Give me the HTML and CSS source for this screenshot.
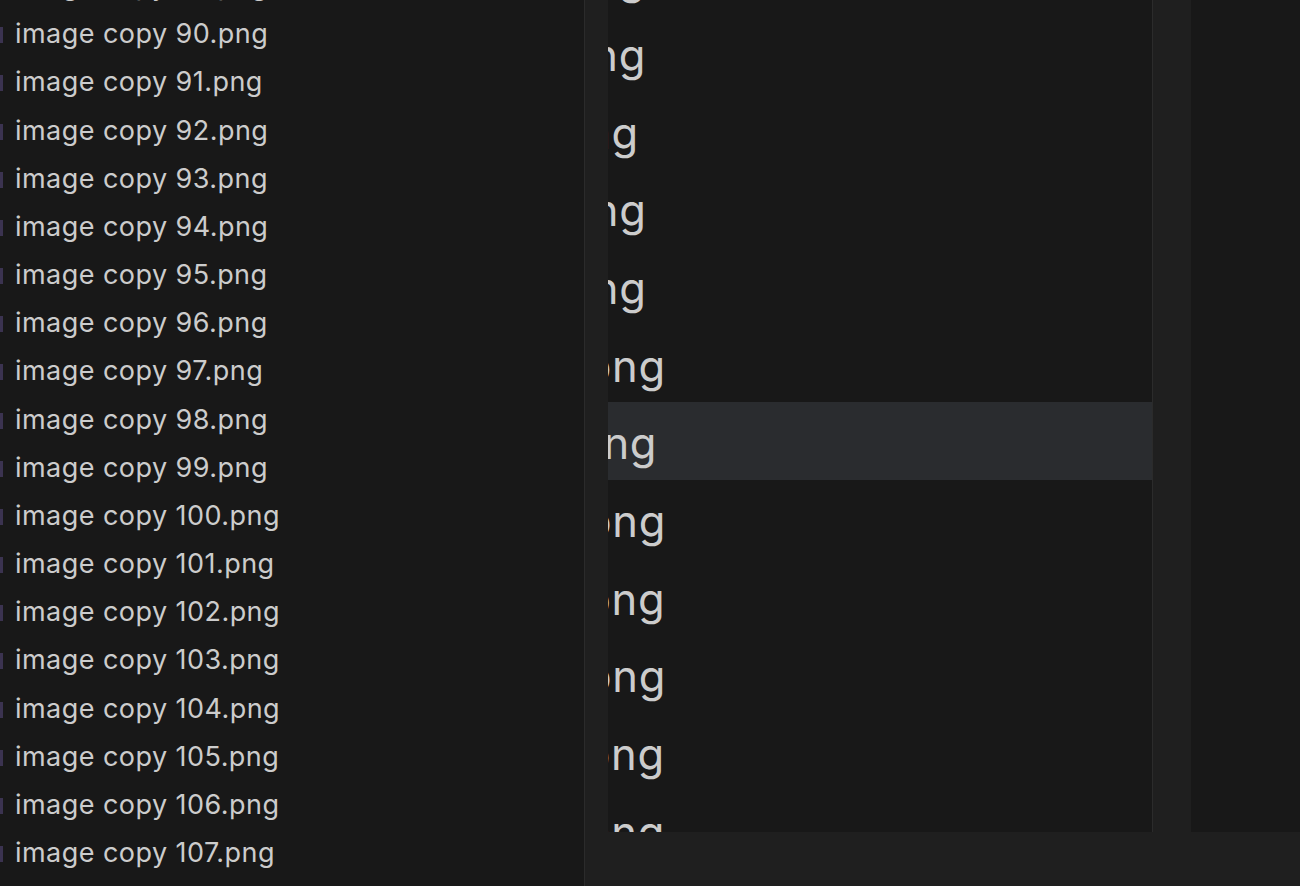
FILE: index.html
```html
<!DOCTYPE html>
<html>
<head>
<meta charset="utf-8">
<link rel="stylesheet" href="styles.css">
</head>
<body>
<div class="app">
  <aside class="sidebar">
    <div class="list">
      <div class="row"><span class="mark"></span><span class="name">image copy 89.png</span></div>
      <div class="row"><span class="mark"></span><span class="name">image copy 90.png</span></div>
      <div class="row"><span class="mark"></span><span class="name">image copy 91.png</span></div>
      <div class="row"><span class="mark"></span><span class="name">image copy 92.png</span></div>
      <div class="row"><span class="mark"></span><span class="name">image copy 93.png</span></div>
      <div class="row"><span class="mark"></span><span class="name">image copy 94.png</span></div>
      <div class="row"><span class="mark"></span><span class="name">image copy 95.png</span></div>
      <div class="row"><span class="mark"></span><span class="name">image copy 96.png</span></div>
      <div class="row"><span class="mark"></span><span class="name">image copy 97.png</span></div>
      <div class="row"><span class="mark"></span><span class="name">image copy 98.png</span></div>
      <div class="row"><span class="mark"></span><span class="name">image copy 99.png</span></div>
      <div class="row"><span class="mark"></span><span class="name">image copy 100.png</span></div>
      <div class="row"><span class="mark"></span><span class="name">image copy 101.png</span></div>
      <div class="row"><span class="mark"></span><span class="name">image copy 102.png</span></div>
      <div class="row"><span class="mark"></span><span class="name">image copy 103.png</span></div>
      <div class="row"><span class="mark"></span><span class="name">image copy 104.png</span></div>
      <div class="row"><span class="mark"></span><span class="name">image copy 105.png</span></div>
      <div class="row"><span class="mark"></span><span class="name">image copy 106.png</span></div>
      <div class="row"><span class="mark"></span><span class="name">image copy 107.png</span></div>
      <div class="row"><span class="mark"></span><span class="name">image copy 108.png</span></div>
    </div>
  </aside>
  <main class="workbench">
    <div class="top">
      <div class="gutter"></div>
      <section class="zoomed">
        <div class="zlist">
          <div class="zrow"><span class="zname">image copy 95.png</span></div>
          <div class="zrow"><span class="zname">image copy 96.png</span></div>
          <div class="zrow"><span class="zname">image copy 97.png</span></div>
          <div class="zrow"><span class="zname">image copy 98.png</span></div>
          <div class="zrow"><span class="zname">image copy 99.png</span></div>
          <div class="zrow"><span class="zname">image copy 100.png</span></div>
          <div class="zrow hover"><span class="zname">image copy 101.png</span></div>
          <div class="zrow"><span class="zname">image copy 102.png</span></div>
          <div class="zrow"><span class="zname">image copy 103.png</span></div>
          <div class="zrow"><span class="zname">image copy 104.png</span></div>
          <div class="zrow"><span class="zname">image copy 105.png</span></div>
          <div class="zrow"><span class="zname">image copy 106.png</span></div>
        </div>
      </section>
      <div class="rstrip"></div>
      <div class="rest"></div>
    </div>
    <div class="bottom"></div>
  </main>
</div>
</body>
</html>
```
FILE: styles.css
```css
html, body {
  margin: 0;
  padding: 0;
  width: 1300px;
  height: 886px;
  overflow: hidden;
  background: #181818;
}
.app {
  display: flex;
  width: 1300px;
  height: 886px;
  font-family: "Inter", "Liberation Sans", sans-serif;
  color: #cccccc;
}
.sidebar {
  width: 584px;
  flex: none;
  background: #181818;
  border-right: 1px solid #2b2b2b;
  overflow: hidden;
}
.list {
  margin-top: -38px;
}
.row {
  display: flex;
  align-items: flex-start;
  height: 48.18px;
  line-height: 48.18px;
  font-size: 27px;
  letter-spacing: 0.45px;
  white-space: nowrap;
}
.mark {
  flex: none;
  width: 3px;
  height: 16px;
  margin-top: 17px;
  background: #3b3350;
}
.name {
  margin-left: 12px;
}
.workbench {
  flex: 1;
  display: flex;
  flex-direction: column;
  min-width: 0;
}
.top {
  height: 832px;
  display: flex;
  flex: none;
}
.gutter {
  width: 23px;
  flex: none;
  background: #1f1f1f;
}
.zoomed {
  width: 544px;
  flex: none;
  background: #181818;
  border-right: 1px solid #2b2b2b;
  overflow: hidden;
}
.zlist {
  margin-top: -63.5px;
}
.zrow {
  box-sizing: border-box;
  height: 77.67px;
  padding-top: 6px;
  line-height: 71.67px;
  font-size: 43.5px;
  letter-spacing: 0.73px;
  white-space: nowrap;
  overflow: hidden;
}
.zrow.hover {
  background: #2a2c2f;
}
.zname {
  display: inline-block;
  margin-left: -369px;
}
.rstrip {
  width: 38px;
  flex: none;
  background: #1f1f1f;
}
.rest {
  flex: 1;
  background: #181818;
}
.bottom {
  flex: 1;
  background: #1f1f1f;
}
```
